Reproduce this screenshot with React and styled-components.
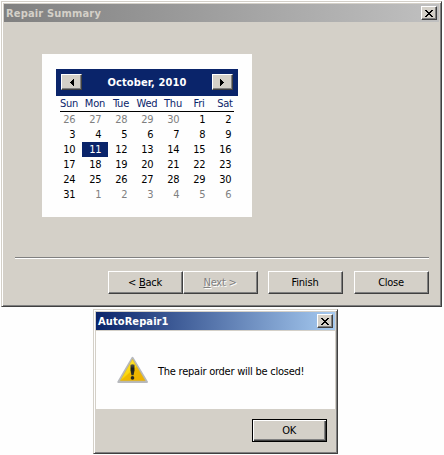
import React from "react";
import styled, { createGlobalStyle, css } from "styled-components";

const Global = createGlobalStyle`
  * { box-sizing: border-box; }
  body { margin: 0; background: #fefefe; overflow: hidden; }
  button { margin: 0; }
`;

const face = css`
  font-family: "DejaVu Sans Condensed", "DejaVu Sans", sans-serif;
  font-stretch: condensed;
  font-size: 11px;
  line-height: 15px;
`;

const Desktop = styled.main`
  ${face}
  width: 444px;
  height: 455px;
  padding: 1px 0 0 1px;
  color: #000;
`;

const Window = styled.section`
  display: flex;
  flex-direction: column;
  width: ${(p) => p.$width}px;
  height: ${(p) => p.$height}px;
  margin: ${(p) => p.$margin || "0"};
  padding: 1px;
  background: #d4d0c8;
  border: 1px solid;
  border-color: #d4d0c8 #404040 #404040 #d4d0c8;
  box-shadow: inset 1px 1px #fff, inset -1px -1px #808080;
`;

const TitleBar = styled.header`
  display: flex;
  align-items: center;
  justify-content: space-between;
  height: 18px;
  margin: 1px 1px 0;
  padding: 0 2px;
  background: linear-gradient(90deg, ${(p) => (p.$active ? "#0a246a, #a6caf0" : "#808080, #c0c0c0")});
  color: ${(p) => (p.$active ? "#fff" : "#d4d0c8")};
`;

const Label = styled.span`
  display: inline-block;
  white-space: pre;
  font-weight: ${(p) => (p.$bold ? 700 : 400)};
  letter-spacing: ${(p) => p.$spacing || 0}px;
`;

const bevel = css`
  padding: 0;
  background: #d4d0c8;
  border: 1px solid;
  border-color: #fff #404040 #404040 #fff;
  border-radius: 0;
  box-shadow: inset -1px -1px #808080;
`;

const SmallButton = styled.button`
  ${bevel}
  display: flex;
  align-items: center;
  justify-content: center;
  width: ${(p) => p.$width}px;
  height: ${(p) => p.$height}px;
  svg { display: block; }
`;

const PushButton = styled.button`
  ${bevel}
  ${face}
  width: 75px;
  height: 23px;
  padding-right: 1px;
  color: ${(p) => (p.disabled ? "#808080" : "#000")};
  text-shadow: ${(p) => (p.disabled ? "1px 1px #fff" : "none")};
  ${(p) => p.$default && css`
    border-color: #000;
    box-shadow: inset 1px 1px #fff, inset -1px -1px #404040, inset -2px -2px #808080;
  `}
`;

const Calendar = styled.div`
  width: 210px;
  height: 163px;
  margin: 32px 0 0 39px;
  padding: 15px 14px 0;
  background: #fefefe;
`;

const MonthBar = styled.div`
  display: flex;
  align-items: center;
  justify-content: space-between;
  height: 27px;
  padding: 0 5px 1px;
  background: #0a246a;
  color: #fff;
`;

const WeekDays = styled.div`
  display: grid;
  grid-template-columns: repeat(7, 26px);
  justify-content: center;
  justify-items: center;
  height: 16px;
  margin: 0 4px;
  border-bottom: 1px solid #000;
  color: #0a246a;
`;

const Days = styled.div`
  display: grid;
  grid-template-columns: repeat(7, 26px);
  grid-auto-rows: 15px;
`;

const Day = styled.span`
  padding-right: 6.7px;
  line-height: 16px;
  letter-spacing: -0.3px;
  text-align: right;
  color: ${(p) => (p.$selected ? "#fff" : p.$muted ? "#808080" : "#000")};
  background: ${(p) => (p.$selected ? "#0a246a" : "transparent")};
`;

const Divider = styled.div`
  height: 2px;
  margin: 40px 11px 0 12px;
  background: #fff;
  border-top: 1px solid #808080;
`;

const Actions = styled.div`
  display: flex;
  justify-content: flex-end;
  margin: 12px 11px 0 0;
`;

const Gap = styled.span`
  width: ${(p) => p.$width}px;
`;

const Message = styled.div`
  display: flex;
  height: 78px;
  margin: 1px 1px 0;
  padding: 25px 0 0 21px;
  background: #fefefe;
`;

const MessageText = styled.p`
  margin: 8px 0 0 9px;
`;

const DialogActions = styled.div`
  display: flex;
  justify-content: flex-end;
  padding: 10px 9px 0 0;
`;

function CloseIcon() {
  return (
    <svg width="8" height="7" viewBox="0 0 8 7" shapeRendering="crispEdges">
      <path d="M0 0h2v1h1v1h2v-1h1v-1h2v1h-1v1h-1v1h-1v1h1v1h1v1h1v1h-2v-1h-1v-1h-2v1h-1v1h-2v-1h1v-1h1v-1h1v-1h-1v-1h-1v-1h-1z" />
    </svg>
  );
}

function Arrow({ right }) {
  return (
    <svg width="6" height="7" viewBox="0 0 6 7" shapeRendering="crispEdges">
      <path d={right ? "M1 0h1v1h1v1h1v1h1v1h-1v1h-1v1h-1v1h-1z" : "M4 0h1v7h-1v-1h-1v-1h-1v-1h-1v-1h1v-1h1v-1h1z"} />
    </svg>
  );
}

function WarningIcon() {
  return (
    <svg width="32" height="28" viewBox="0 0 32 28">
      <defs>
        <linearGradient id="gold" x1="0" y1="0" x2="1" y2="1">
          <stop offset="0" stopColor="#ffed58" />
          <stop offset="0.48" stopColor="#fbd70d" />
          <stop offset="0.52" stopColor="#efb900" />
          <stop offset="1" stopColor="#eeb000" />
        </linearGradient>
        <linearGradient id="ink" x1="0" y1="0" x2="0" y2="1">
          <stop offset="0" stopColor="#595a50" />
          <stop offset="0.4" stopColor="#17191b" />
          <stop offset="1" stopColor="#353629" />
        </linearGradient>
      </defs>
      <path d="M15.5 1.8L30 26H1.3z" fill="#b7b9bd" stroke="#b7b9bd" strokeWidth="2" strokeLinejoin="round" />
      <path d="M15.5 3.3L28.2 24.7H3.2z" fill="url(#gold)" stroke="#d8b32a" strokeWidth=".5" strokeLinejoin="round" />
      <path d="M13.5 8.8q2-1.2 4 0v5.4l-.9 5h-2.2l-.9-5z" fill="url(#ink)" />
      <circle cx="15.5" cy="21.9" r="1.8" fill="#292a24" />
    </svg>
  );
}

const previous = [26, 27, 28, 29, 30];
const dates = [
  ...previous.map((value) => ({ value, muted: true })),
  ...Array.from({ length: 31 }, (_, i) => ({ value: i + 1, muted: false })),
  ...Array.from({ length: 6 }, (_, i) => ({ value: i + 1, muted: true })),
];

export default function App() {
  return (
    <Desktop>
      <Global />
      <Window $width={441} $height={306}>
        <TitleBar>
          <Label $bold $spacing={0.17}>Repair Summary</Label>
          <SmallButton $width={16} $height={14} aria-label="Close window"><CloseIcon /></SmallButton>
        </TitleBar>
        <Calendar>
          <MonthBar>
            <SmallButton $width={21} $height={16} aria-label="Previous month"><Arrow /></SmallButton>
            <Label $bold $spacing={0.1}>October, 2010</Label>
            <SmallButton $width={21} $height={16} aria-label="Next month"><Arrow right /></SmallButton>
          </MonthBar>
          <WeekDays>
            {["Sun", "Mon", "Tue", "Wed", "Thu", "Fri", "Sat"].map((d) => <Label key={d} $spacing={-0.2}>{d}</Label>)}
          </WeekDays>
          <Days>
            {dates.map((d, i) => (
              <Day key={i} $muted={d.muted} $selected={d.value === 11}>{d.value}</Day>
            ))}
          </Days>
        </Calendar>
        <Divider />
        <Actions>
          <PushButton><Label $spacing={-0.25}>&lt; <u>B</u>ack</Label></PushButton>
          <PushButton disabled><Label $spacing={-0.25}><u>N</u>ext &gt;</Label></PushButton>
          <Gap $width={10} />
          <PushButton><Label $spacing={-0.15}>Finish</Label></PushButton>
          <Gap $width={11} />
          <PushButton><Label $spacing={-0.25}>Close</Label></PushButton>
        </Actions>
      </Window>
      <Window $width={245} $height={145} $margin="2px 0 0 92px">
        <TitleBar $active>
          <Label $bold $spacing={0.1}>AutoRepair1</Label>
          <SmallButton $width={16} $height={14} aria-label="Close message"><CloseIcon /></SmallButton>
        </TitleBar>
        <Message>
          <WarningIcon />
          <MessageText><Label $spacing={-0.24}>The repair order will be closed!</Label></MessageText>
        </Message>
        <DialogActions>
          <PushButton $default><Label $spacing={-0.3}>OK</Label></PushButton>
        </DialogActions>
      </Window>
    </Desktop>
  );
}
